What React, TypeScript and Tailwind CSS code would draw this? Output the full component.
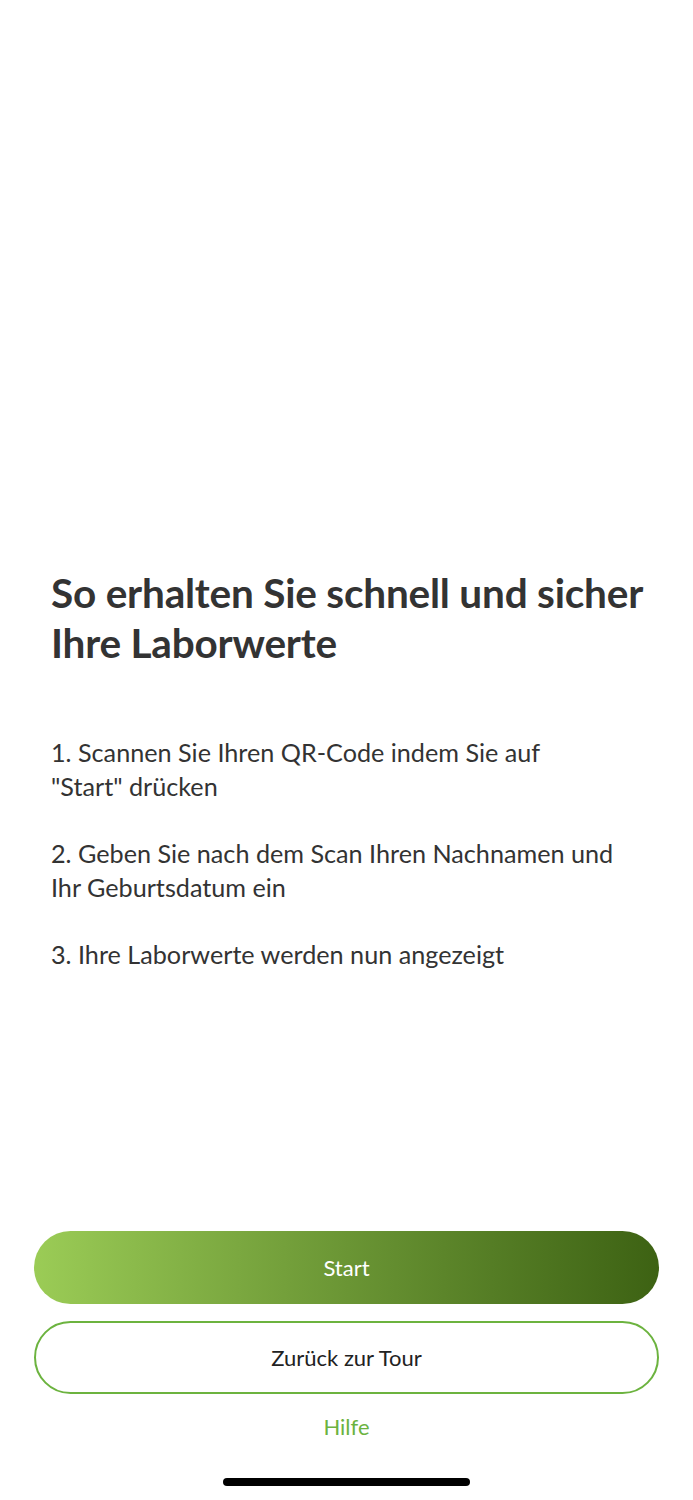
export default function App() {
  const steps = [
    '1. Scannen Sie Ihren QR-Code indem Sie auf\n"Start" drücken',
    '2. Geben Sie nach dem Scan Ihren Nachnamen und\nIhr Geburtsdatum ein',
    '3. Ihre Laborwerte werden nun angezeigt',
  ];

  return (
    <div
      className="flex flex-col h-[1500px] w-full bg-white text-[#333333]"
      style={{ fontFamily: 'Lato, "Open Sans", sans-serif' }}
    >
      {/* Intro text */}
      <div className="pl-[51px] pr-[40px] pt-[568px]">
        <h1 className="text-[40.5px] leading-[50px] font-bold tracking-[-0.2px]">
          So erhalten Sie schnell und sicher
          <br />
          Ihre Laborwerte
        </h1>
        <div className="mt-[68px] text-[25.2px] leading-[33.7px] whitespace-pre-line">
          {steps.join('\n\n')}
        </div>
      </div>

      {/* Actions */}
      <div className="mt-auto flex flex-col px-[34px]">
        <button className="h-[73px] rounded-full bg-gradient-to-r from-[#9bcc56] to-[#3d6213] text-white text-[22px]">
          Start
        </button>
        <button className="mt-[17px] h-[73px] rounded-full border-2 border-[#6cb33f] text-[#222222] text-[22px]">
          Zurück zur Tour
        </button>
        <button className="mt-[14px] h-[36px] text-[#6cb33f] text-[22px]">Hilfe</button>
      </div>

      {/* Home indicator */}
      <div className="flex justify-center pt-[34px] pb-[14px]">
        <div className="w-[247px] h-[8px] rounded-full bg-black" />
      </div>
    </div>
  );
}
